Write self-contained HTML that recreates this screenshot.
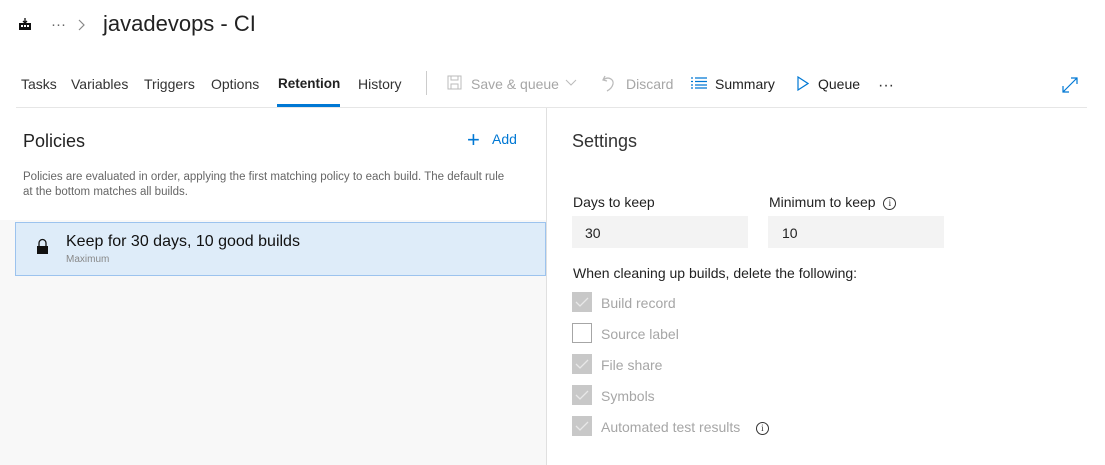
<!DOCTYPE html>
<html><head><style>
*{margin:0;padding:0;box-sizing:border-box}
body{width:1105px;height:465px;overflow:hidden;background:#fff;font-family:"Liberation Sans",sans-serif;color:#212121;position:relative}
.a{position:absolute;white-space:nowrap}
.t{font-size:14px;top:76px;color:#333}
.g{color:#a6a6a6}
.cb{position:absolute;left:572px;width:20px;height:20px;background:#c8c8c8}
.cb svg{position:absolute;left:3px;top:4px}
.lb{position:absolute;left:601px;font-size:14px;color:#a6a6a6}
.info{display:inline-block;width:13px;height:13px;border:1px solid #333;border-radius:50%;font-size:9px;text-align:center;line-height:11px;vertical-align:1px;font-family:"Liberation Serif",serif}
</style></head><body>
<svg class="a" style="left:18px;top:17px" width="14" height="14" viewBox="0 0 14 14"><rect x="1" y="6" width="12" height="7" fill="#111"/><rect x="3" y="8" width="2" height="2" fill="#fff"/><rect x="6" y="8" width="2" height="2" fill="#fff"/><rect x="9" y="8" width="2" height="2" fill="#fff"/><path d="M7 1v5M5 4l2 2 2-2" stroke="#111" stroke-width="1.3" fill="none"/></svg>
<div class="a" style="left:51px;top:16px;font-size:15px;color:#666">···</div>
<svg class="a" style="left:78px;top:19px" width="8" height="12"><path d="M1 1l5 5-5 5" stroke="#888" fill="none" stroke-width="1.2"/></svg>
<div class="a" style="left:103px;top:11px;font-size:22px;color:#222">javadevops - CI</div>

<div class="a t" style="left:21px">Tasks</div>
<div class="a t" style="left:71px">Variables</div>
<div class="a t" style="left:144px">Triggers</div>
<div class="a t" style="left:211px">Options</div>
<div class="a t" style="left:278px;font-weight:bold;color:#222;font-size:13.5px">Retention</div>
<div class="a" style="left:277px;top:104px;width:63px;height:3px;background:#0078d4"></div>
<div class="a t" style="left:358px">History</div>
<div class="a" style="left:426px;top:71px;width:1px;height:24px;background:#ccc"></div>
<svg class="a" style="left:447px;top:75px" width="15" height="15"><rect x="1" y="1" width="13" height="13" fill="none" stroke="#bbb"/><rect x="4" y="1" width="7" height="4" fill="none" stroke="#bbb"/><rect x="4" y="9" width="7" height="5" fill="none" stroke="#bbb"/></svg>
<div class="a t g" style="left:471px">Save &amp; queue</div>
<svg class="a" style="left:565px;top:79px" width="12" height="8"><path d="M1 1l5 5 5-5" stroke="#bbb" fill="none"/></svg>
<svg class="a" style="left:601px;top:74px" width="16" height="18"><path d="M4 2L2 6l4 1M2 6c5-4 11-1 10 4-1 4-4 6-6 7" stroke="#bbb" fill="none" stroke-width="1.3"/></svg>
<div class="a t g" style="left:626px">Discard</div>
<svg class="a" style="left:691px;top:77px" width="16" height="12"><path d="M0 1h2M4 1h12M0 4.5h2M4 4.5h12M0 8h2M4 8h12M0 11h2M4 11h12" stroke="#0078d4" stroke-width="1.2"/></svg>
<div class="a t" style="left:715px;color:#222">Summary</div>
<svg class="a" style="left:797px;top:76px" width="12" height="15"><path d="M1 1l10 6.5L1 14z" stroke="#0078d4" fill="none" stroke-width="1.2"/></svg>
<div class="a t" style="left:818px;color:#222">Queue</div>
<div class="a" style="left:878px;top:77px;font-size:16px;color:#333">···</div>
<svg class="a" style="left:1062px;top:77px" width="16" height="16"><path d="M1 15L15 1M9 1h6v6M1 9v6h6" stroke="#0078d4" fill="none" stroke-width="1.2"/></svg>
<div class="a" style="left:16px;top:107px;width:1071px;height:1px;background:#e6e6e6"></div>

<div class="a" style="left:546px;top:108px;width:1px;height:357px;background:#e0e0e0"></div>
<div class="a" style="left:0;top:220px;width:546px;height:245px;background:#f8f8f8"></div>
<div class="a" style="left:23px;top:131px;font-size:18px;color:#222">Policies</div>
<div class="a" style="left:467px;top:127px;font-size:22px;color:#0078d4;font-weight:300">+</div>
<div class="a" style="left:492px;top:131px;font-size:14px;color:#0078d4">Add</div>
<div class="a" style="left:23px;top:170px;font-size:11.5px;color:#666;line-height:15px">Policies are evaluated in order, applying the first matching policy to each build. The default rule<br>at the bottom matches all builds.</div>
<div class="a" style="left:15px;top:222px;width:531px;height:54px;background:#deecf9;border:1px solid #9cc3ee"></div>
<svg class="a" style="left:36px;top:238px" width="13" height="17"><path d="M3 8V5a3.5 3.5 0 0 1 7 0v3" stroke="#111" fill="none" stroke-width="1.3"/><rect x="1" y="8" width="11" height="8" fill="#111"/></svg>
<div class="a" style="left:66px;top:233px;font-size:16px;color:#111">Keep for 30 days, 10 good builds</div>
<div class="a" style="left:66px;top:254px;font-size:10px;color:#888">Maximum</div>

<div class="a" style="left:572px;top:131px;font-size:18px;color:#333">Settings</div>
<div class="a" style="left:573px;top:194px;font-size:14px;color:#222">Days to keep</div>
<div class="a" style="left:769px;top:194px;font-size:14px;color:#222">Minimum to keep &nbsp;<span class="info">i</span></div>
<div class="a" style="left:572px;top:216px;width:176px;height:32px;background:#f3f3f3;font-size:14px;padding:9px 0 0 13px;color:#222">30</div>
<div class="a" style="left:768px;top:216px;width:176px;height:32px;background:#f3f3f3;font-size:14px;padding:9px 0 0 14px;color:#222">10</div>
<div class="a" style="left:573px;top:265px;font-size:14px;color:#222">When cleaning up builds, delete the following:</div>

<div class="cb" style="top:292px"><svg width="14" height="12"><path d="M1 6l4 4 8-8" stroke="#e8e8e8" fill="none" stroke-width="1.3"/></svg></div><div class="lb" style="top:295px">Build record</div>
<div class="cb" style="top:323px;background:#fff;border:1px solid #a6a6a6"></div><div class="lb" style="top:326px">Source label</div>
<div class="cb" style="top:354px"><svg width="14" height="12"><path d="M1 6l4 4 8-8" stroke="#e8e8e8" fill="none" stroke-width="1.3"/></svg></div><div class="lb" style="top:357px">File share</div>
<div class="cb" style="top:385px"><svg width="14" height="12"><path d="M1 6l4 4 8-8" stroke="#e8e8e8" fill="none" stroke-width="1.3"/></svg></div><div class="lb" style="top:388px">Symbols</div>
<div class="cb" style="top:416px"><svg width="14" height="12"><path d="M1 6l4 4 8-8" stroke="#e8e8e8" fill="none" stroke-width="1.3"/></svg></div><div class="lb" style="top:419px">Automated test results &nbsp;&nbsp;&nbsp;<span class="info" style="color:#333">i</span></div>
</body></html>
